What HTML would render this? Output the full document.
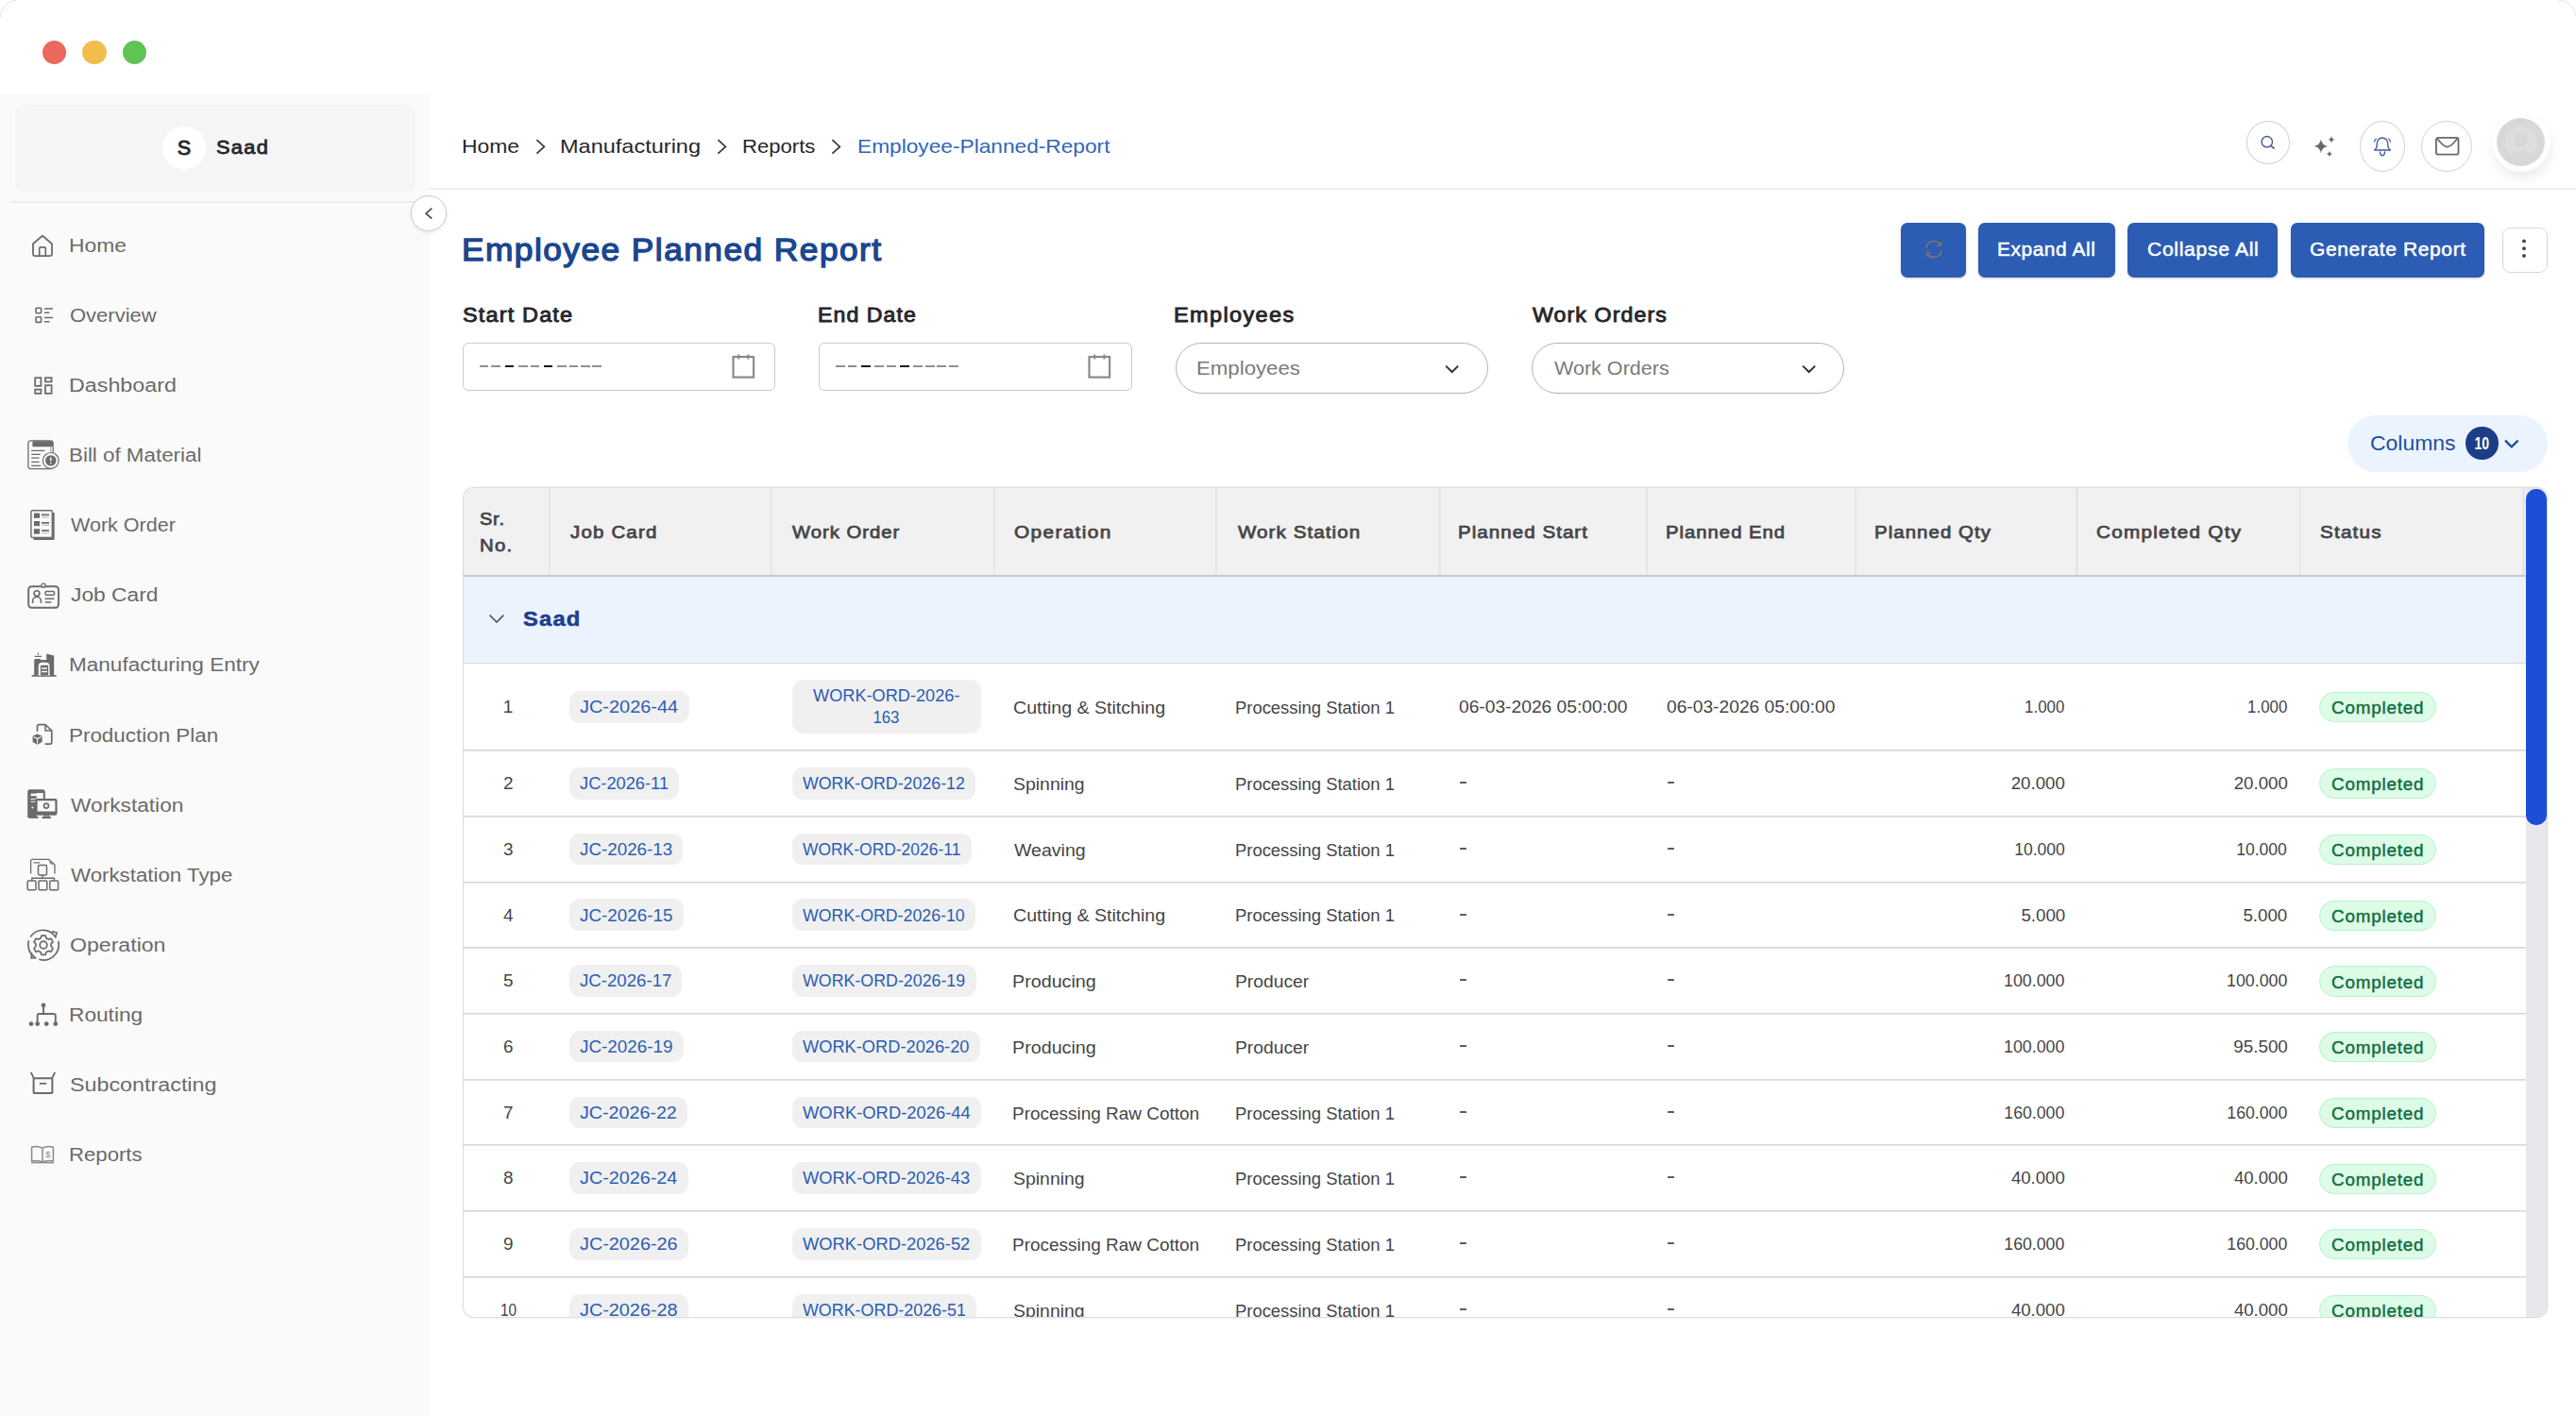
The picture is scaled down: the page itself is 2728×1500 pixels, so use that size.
<!DOCTYPE html>
<html lang="en"><head><meta charset="utf-8"><title>Employee Planned Report</title>
<style>
html,body{margin:0;padding:0;}
body{width:2728px;height:1500px;position:relative;overflow:hidden;background:#fff;font-family:"Liberation Sans", sans-serif;}
span{display:block;}
</style></head><body>
<div style="position:absolute;left:44.60px;top:42.50px;width:25.40px;height:25.40px;box-sizing:border-box;background:#ea685c;border-radius:50%;"></div>
<div style="position:absolute;left:87.15px;top:42.50px;width:25.40px;height:25.40px;box-sizing:border-box;background:#f3bd4e;border-radius:50%;"></div>
<div style="position:absolute;left:129.65px;top:42.50px;width:25.40px;height:25.40px;box-sizing:border-box;background:#60c453;border-radius:50%;"></div>
<svg style="position:absolute;left:0.00px;top:0.00px;" width="20" height="20" viewBox="0 0 20 20" fill="none"><path d="M0.6 17.5 A17 17 0 0 1 17.5 0.6" stroke="#c4c4c8" stroke-width="1.1" stroke-dasharray="1.1 1.9"/></svg>
<svg style="position:absolute;left:2708.00px;top:0.00px;" width="20" height="20" viewBox="0 0 20 20" fill="none"><path d="M2.5 0.6 A17 17 0 0 1 19.4 17.5" stroke="#c4c4c8" stroke-width="1.1" stroke-dasharray="1.1 1.9"/></svg>
<div style="position:absolute;left:0.00px;top:100.00px;width:455.20px;height:1400.00px;box-sizing:border-box;background:#fafafa;"></div>
<div style="position:absolute;left:16.40px;top:110.80px;width:423.20px;height:92.60px;box-sizing:border-box;background:#f5f5f5;border-radius:10px;"></div>
<div style="position:absolute;left:172.20px;top:133.50px;width:45.80px;height:45.80px;box-sizing:border-box;background:#fff;border-radius:50%;"></div>
<span style="position:absolute;left:187.80px;top:142.00px;font-size:21.6px;line-height:29px;font-weight:400;color:#26262b;white-space:nowrap;-webkit-text-stroke:0.86px #26262b;">S</span>
<span style="position:absolute;left:228.67px;top:143.00px;font-size:20.2px;line-height:26px;font-weight:400;color:#26262b;white-space:nowrap;-webkit-text-stroke:0.81px #26262b;letter-spacing:1.275px;transform:scaleX(1.0770);transform-origin:0 0;">Saad</span>
<div style="position:absolute;left:11.00px;top:213.00px;width:429.00px;height:1.80px;box-sizing:border-box;background:#ececec;"></div>
<svg style="position:absolute;left:33.20px;top:247.70px;" width="24" height="25" viewBox="0 0 24 25" fill="none"><path d="M2 10.2 L12 1.7 L22 10.2 V20.8 a2.4 2.4 0 0 1 -2.4 2.4 H4.4 A2.4 2.4 0 0 1 2 20.8 Z" stroke="#6b6a6c" stroke-width="1.8" stroke-linejoin="round"/><path d="M8.7 23 V15.3 a1.5 1.5 0 0 1 1.5 -1.5 h3.6 a1.5 1.5 0 0 1 1.5 1.5 V23" stroke="#6b6a6c" stroke-width="1.7"/></svg>
<span style="position:absolute;left:73.07px;top:247.00px;font-size:20px;line-height:26px;font-weight:400;color:#6a6a6a;white-space:nowrap;transform:scaleX(1.1409);transform-origin:0 0;">Home</span>
<svg style="position:absolute;left:36.90px;top:325.43px;" width="20" height="18" viewBox="0 0 20 18" fill="none"><rect x="1" y="1.2" width="5.6" height="5.6" rx="1" stroke="#6b6a6c" stroke-width="1.6"/><rect x="1" y="10.8" width="5.6" height="5.6" rx="1" stroke="#6b6a6c" stroke-width="1.6"/><path d="M10 2 H19 M10 6.2 H15.5 M10 11.6 H19 M10 15.8 H15.5" stroke="#6b6a6c" stroke-width="1.5"/></svg>
<span style="position:absolute;left:73.91px;top:321.00px;font-size:20px;line-height:26px;font-weight:400;color:#6a6a6a;white-space:nowrap;transform:scaleX(1.0993);transform-origin:0 0;">Overview</span>
<svg style="position:absolute;left:36.10px;top:398.76px;" width="20" height="19" viewBox="0 0 20 19" fill="none"><rect x="1.2" y="1.2" width="6.2" height="8.6" stroke="#6b6a6c" stroke-width="1.8"/><rect x="12" y="1.2" width="6.6" height="4.2" stroke="#6b6a6c" stroke-width="1.8"/><rect x="1.2" y="13.6" width="6.2" height="4.2" stroke="#6b6a6c" stroke-width="1.8"/><rect x="12" y="9.2" width="6.6" height="8.6" stroke="#6b6a6c" stroke-width="1.8"/></svg>
<span style="position:absolute;left:73.04px;top:395.00px;font-size:20px;line-height:26px;font-weight:400;color:#6a6a6a;white-space:nowrap;transform:scaleX(1.1640);transform-origin:0 0;">Dashboard</span>
<svg style="position:absolute;left:28.70px;top:466.09px;" width="34" height="33" viewBox="0 0 34 33" fill="none"><rect x="0.9" y="0.9" width="26.2" height="29.8" rx="2.6" stroke="#6b6a6c" stroke-width="1.3"/><rect x="5.4" y="1.3" width="21.6" height="6" rx="1" fill="#6b6a6c"/><path d="M4.2 11.4 H18.4 M4.2 15.3 H13.6 M4.2 19.2 H12.6 M4.2 23.4 H12.6 M4.2 27.4 H14.2" stroke="#6b6a6c" stroke-width="1.2"/><path d="M24.6 8 V13.4" stroke="#6b6a6c" stroke-width="1" stroke-dasharray="1.4 1"/><circle cx="24.8" cy="21.9" r="8.4" fill="#fafafa" stroke="#6b6a6c" stroke-width="1.2"/><circle cx="24.8" cy="21.9" r="5.7" fill="#6b6a6c"/><path d="M24.8 18.4 V22.6 M24.8 24.2 V25.4" stroke="#fafafa" stroke-width="1.5"/></svg>
<span style="position:absolute;left:73.11px;top:469.00px;font-size:20px;line-height:26px;font-weight:400;color:#6a6a6a;white-space:nowrap;transform:scaleX(1.1177);transform-origin:0 0;">Bill of Material</span>
<svg style="position:absolute;left:32.20px;top:540.32px;" width="28" height="33" viewBox="0 0 28 33" fill="none"><path d="M3.4 30.7 H24.5 V3" stroke="#6b6a6c" stroke-width="2.4" stroke-linejoin="round"/><rect x="0.9" y="0.7" width="22.4" height="28.7" rx="1.6" stroke="#6b6a6c" stroke-width="1.4" fill="#fafafa"/><rect x="3.9" y="3.6" width="6.1" height="5.2" fill="#6b6a6c"/><rect x="3.9" y="12" width="6.1" height="5.2" fill="#6b6a6c"/><rect x="3.9" y="20.2" width="6.1" height="5.4" fill="#6b6a6c"/><path d="M12 5.4 H20 M12 13.8 H20 M12 22.2 H20" stroke="#6b6a6c" stroke-width="1.7"/><path d="M12.4 8 H20 M12.4 16.4 H20 M12.4 24.8 H20" stroke="#6b6a6c" stroke-width=".9" opacity=".55"/></svg>
<span style="position:absolute;left:74.90px;top:543.00px;font-size:20px;line-height:26px;font-weight:400;color:#6a6a6a;white-space:nowrap;transform:scaleX(1.0767);transform-origin:0 0;">Work Order</span>
<svg style="position:absolute;left:28.60px;top:617.05px;" width="34" height="28" viewBox="0 0 34 28" fill="none"><rect x="1.2" y="4.2" width="31.8" height="22.6" rx="3.2" stroke="#6b6a6c" stroke-width="1.9"/><circle cx="17" cy="3.2" r="2.1" fill="#fafafa" stroke="#6b6a6c" stroke-width="1.4"/><circle cx="10" cy="11.6" r="2.9" stroke="#6b6a6c" stroke-width="1.6"/><path d="M5.6 22 v-2.4 a4.4 4.4 0 0 1 8.8 0 V22" stroke="#6b6a6c" stroke-width="1.6"/><rect x="19" y="9.6" width="9.6" height="3.7" rx="1.4" stroke="#6b6a6c" stroke-width="1.5"/><path d="M18.6 17.2 H28.4 M18.6 21 H25.4" stroke="#6b6a6c" stroke-width="1.6"/></svg>
<span style="position:absolute;left:74.56px;top:617.00px;font-size:20px;line-height:26px;font-weight:400;color:#6a6a6a;white-space:nowrap;transform:scaleX(1.1390);transform-origin:0 0;">Job Card</span>
<svg style="position:absolute;left:32.50px;top:691.48px;" width="28" height="27" viewBox="0 0 28 27" fill="none"><path d="M0.6 25 H26.6" stroke="#6b6a6c" stroke-width="1.7"/><path d="M16.2 1.4 L24.2 3.4 V24.6 H16.2 Z" fill="#6b6a6c"/><path d="M3.2 24.6 V8.4 a1.4 1.4 0 0 1 1.4 -1.4 H10 V10 H7.6 V24.6 Z" fill="#6b6a6c"/><path d="M7.4 0.6 V2.6 M3.8 4.3 H11" stroke="#6b6a6c" stroke-width="1.3"/><path d="M6.4 24.6 V14.4 a5 5 0 0 1 5 -5 h4.4 a5 5 0 0 1 5 5 V24.6" fill="#fafafa" stroke="#6b6a6c" stroke-width="2.6"/><rect x="9.9" y="13.8" width="8.2" height="10.6" rx="1" fill="#6b6a6c"/><path d="M11 17 H17 M11 20.6 H17" stroke="#fafafa" stroke-width="1.5"/></svg>
<span style="position:absolute;left:73.10px;top:691.00px;font-size:20px;line-height:26px;font-weight:400;color:#6a6a6a;white-space:nowrap;transform:scaleX(1.1276);transform-origin:0 0;">Manufacturing Entry</span>
<svg style="position:absolute;left:33.20px;top:765.91px;" width="24" height="25" viewBox="0 0 24 25" fill="none"><path d="M6.5 9 V3.2 a1.6 1.6 0 0 1 1.6 -1.6 H15 L21.8 8 V20.6 a1.6 1.6 0 0 1 -1.6 1.6 H14.5" stroke="#6b6a6c" stroke-width="1.7"/><path d="M15 1.8 V8 H21.6" stroke="#6b6a6c" stroke-width="1.5"/><path d="M6.6 11.4 L11.6 13.8 V20 L6.6 22.8 L1.6 20 V13.8 Z" fill="#6b6a6c"/><path d="M2.6 14.6 L6.6 16.6 L10.6 14.6 M6.6 16.6 V21.6" stroke="#fafafa" stroke-width="1.1"/></svg>
<span style="position:absolute;left:73.11px;top:766.00px;font-size:20px;line-height:26px;font-weight:400;color:#6a6a6a;white-space:nowrap;transform:scaleX(1.1201);transform-origin:0 0;">Production Plan</span>
<svg style="position:absolute;left:29.20px;top:836.44px;" width="32" height="32" viewBox="0 0 32 32" fill="none"><path d="M1.2 30 V3 a1.8 1.8 0 0 1 1.8 -1.8 H16 a1.8 1.8 0 0 1 1.8 1.8 V10" stroke="#6b6a6c" stroke-width="2"/><rect x="1.5" y="1.5" width="8.2" height="28.5" fill="#6b6a6c"/><rect x="1.5" y="1.5" width="16" height="2.6" fill="#6b6a6c"/><rect x="3.6" y="4.6" width="11.6" height="2.6" fill="#fafafa"/><path d="M3.4 10.4 H9 M3.4 13.2 H9" stroke="#fafafa" stroke-width="1"/><circle cx="5.4" cy="19.6" r="1" fill="#fafafa"/><rect x="9.5" y="11.2" width="21" height="15.4" rx="1" stroke="#6b6a6c" stroke-width="2.2" fill="#fafafa"/><path d="M10 24.8 H30" stroke="#6b6a6c" stroke-width="2.6"/><circle cx="20" cy="17.6" r="2.5" stroke="#6b6a6c" stroke-width="1.7"/><path d="M15.4 30 H25 M18 29.8 L19.4 27 M22.6 29.8 L21.2 27" stroke="#6b6a6c" stroke-width="1.8"/><path d="M1.5 29.8 H11.4" stroke="#6b6a6c" stroke-width="2.2"/></svg>
<span style="position:absolute;left:74.90px;top:840.00px;font-size:20px;line-height:26px;font-weight:400;color:#6a6a6a;white-space:nowrap;transform:scaleX(1.1346);transform-origin:0 0;">Workstation</span>
<svg style="position:absolute;left:28.20px;top:909.07px;" width="35" height="35" viewBox="0 0 35 35" fill="none"><path d="M4.6 16.6 V3 a1.6 1.6 0 0 1 1.6 -1.6 H23.6 L30 7 V16.6" stroke="#6b6a6c" stroke-width="1.3"/><path d="M7.4 4.9 H14.4" stroke="#6b6a6c" stroke-width="1.2"/><path d="M24.4 4 L27.4 6.8" stroke="#6b6a6c" stroke-width="1.1"/><rect x="12.5" y="7.6" width="9" height="10.4" rx="1.6" stroke="#6b6a6c" stroke-width="1.5"/><path d="M17 18.2 V21.2 M5.8 24.2 V21.2 H29.4 V24.2" stroke="#6b6a6c" stroke-width="1.4"/><rect x="1.2" y="24" width="8.8" height="9.8" rx="1" stroke="#6b6a6c" stroke-width="1.5"/><rect x="13" y="24" width="8.8" height="9.8" rx="1" stroke="#6b6a6c" stroke-width="1.5"/><rect x="24.8" y="24" width="8.8" height="9.8" rx="1" stroke="#6b6a6c" stroke-width="1.5"/></svg>
<span style="position:absolute;left:74.90px;top:914.00px;font-size:20px;line-height:26px;font-weight:400;color:#6a6a6a;white-space:nowrap;transform:scaleX(1.1140);transform-origin:0 0;">Workstation Type</span>
<svg style="position:absolute;left:27.50px;top:982.50px;" width="36.04" height="36.04" viewBox="0 0 34 34" fill="none"><path d="M29.5 9.5 A15 15 0 0 0 4 9" stroke="#6b6a6c" stroke-width="1.6"/><path d="M2.3 12.5 A15.3 15.3 0 0 0 8.6 29.6" stroke="#6b6a6c" stroke-width="1.6"/><path d="M12.5 31.4 A15.3 15.3 0 0 0 31.8 13.2" stroke="#6b6a6c" stroke-width="1.6"/><path d="M25.2 3.4 L30.4 4.8 L28.6 9.8" stroke="#6b6a6c" stroke-width="1.5"/><path d="M5.2 25 L4.8 30.2 L10 30" stroke="#6b6a6c" stroke-width="1.5"/><circle cx="17" cy="17" r="3.6" stroke="#6b6a6c" stroke-width="1.7"/><path d="M15 7.6 h4 l.7 2.6 l2.2 1.2 l2.6 -.8 l2 3.5 l-1.9 1.9 v2.4 l1.9 1.9 l-2 3.5 l-2.6 -.8 l-2.2 1.2 l-.7 2.6 h-4 l-.7 -2.6 l-2.2 -1.2 l-2.6 .8 l-2 -3.5 l1.9 -1.9 v-2.4 l-1.9 -1.9 l2 -3.5 l2.6 .8 l2.2 -1.2 z" stroke="#6b6a6c" stroke-width="1.6" stroke-linejoin="round"/></svg>
<span style="position:absolute;left:73.86px;top:988.00px;font-size:20px;line-height:26px;font-weight:400;color:#6a6a6a;white-space:nowrap;transform:scaleX(1.1551);transform-origin:0 0;">Operation</span>
<svg style="position:absolute;left:29.80px;top:1061.53px;" width="32" height="26" viewBox="0 0 32 26" fill="none"><circle cx="16" cy="2.9" r="2.4" fill="#6b6a6c"/><path d="M16 4 V12 M9.6 21 V14 a2 2 0 0 1 2 -2 H26.8 a2 2 0 0 1 2 2 V21" stroke="#6b6a6c" stroke-width="1.9"/><circle cx="3" cy="22.6" r="2.4" fill="#6b6a6c"/><circle cx="9.7" cy="22.6" r="2.4" fill="#6b6a6c"/><circle cx="19.2" cy="22.6" r="2.4" fill="#6b6a6c"/><circle cx="28.8" cy="22.6" r="2.4" fill="#6b6a6c"/></svg>
<span style="position:absolute;left:73.08px;top:1062.00px;font-size:20px;line-height:26px;font-weight:400;color:#6a6a6a;white-space:nowrap;transform:scaleX(1.1344);transform-origin:0 0;">Routing</span>
<svg style="position:absolute;left:32.20px;top:1135.36px;" width="28" height="26" viewBox="0 0 28 26" fill="none"><path d="M0.8 0.8 L3.8 7.2 M26.2 0.8 L23.2 7.2" stroke="#6b6a6c" stroke-width="1.8"/><rect x="3.6" y="7.2" width="19.8" height="15.8" rx="0.8" stroke="#6b6a6c" stroke-width="2"/><path d="M9.8 12.8 H17.2" stroke="#6b6a6c" stroke-width="1.8"/></svg>
<span style="position:absolute;left:73.85px;top:1136.00px;font-size:20px;line-height:26px;font-weight:400;color:#6a6a6a;white-space:nowrap;transform:scaleX(1.1653);transform-origin:0 0;">Subcontracting</span>
<svg style="position:absolute;left:32.20px;top:1212.59px;" width="26" height="20" viewBox="0 0 26 20" fill="none"><path d="M13 3.2 C10 1.6 5 1.4 1.6 2.2 V17 C5 16.2 10 16.4 13 18 C16 16.4 21 16.2 24.4 17 V2.2 C21 1.4 16 1.6 13 3.2 Z M13 3.2 V18" stroke="#8a8a8a" stroke-width="1.5" stroke-linejoin="round"/><path d="M1 18.6 H25" stroke="#8a8a8a" stroke-width="1.5"/><text x="18.8" y="12.8" font-size="9" fill="#8a8a8a" text-anchor="middle" font-family="Liberation Sans">$</text></svg>
<span style="position:absolute;left:73.13px;top:1210.00px;font-size:20px;line-height:26px;font-weight:400;color:#6a6a6a;white-space:nowrap;transform:scaleX(1.1073);transform-origin:0 0;">Reports</span>
<div style="position:absolute;left:435.40px;top:207.30px;width:37.40px;height:37.40px;box-sizing:border-box;background:#fff;border-radius:50%;border:1.7px solid #c9c9cd;box-shadow:0 2px 4px rgba(0,0,0,.07);"></div>
<svg style="position:absolute;left:447.00px;top:218.00px;" width="14" height="16" viewBox="0 0 14 16" fill="none"><path d="M10.3 2.7 L4.2 8.2 L10.3 13.7" stroke="#4a4a4e" stroke-width="1.7"/></svg>
<div style="position:absolute;left:455.20px;top:199.00px;width:2272.80px;height:1.90px;box-sizing:border-box;background:#efefef;"></div>
<span style="position:absolute;left:488.65px;top:141.00px;font-size:21px;line-height:27px;font-weight:400;color:#26262b;white-space:nowrap;transform:scaleX(1.0910);transform-origin:0 0;">Home</span>
<span style="position:absolute;left:593.40px;top:141.00px;font-size:21px;line-height:27px;font-weight:400;color:#26262b;white-space:nowrap;transform:scaleX(1.1199);transform-origin:0 0;">Manufacturing</span>
<span style="position:absolute;left:785.81px;top:141.00px;font-size:21px;line-height:27px;font-weight:400;color:#26262b;white-space:nowrap;transform:scaleX(1.0530);transform-origin:0 0;">Reports</span>
<span style="position:absolute;left:907.56px;top:141.00px;font-size:21px;line-height:27px;font-weight:400;color:#2f66bd;white-space:nowrap;transform:scaleX(1.0809);transform-origin:0 0;">Employee-Planned-Report</span>
<svg style="position:absolute;left:566.80px;top:146.50px;" width="12" height="17" viewBox="0 0 12 17" fill="none"><path d="M1.4 1.2 L9.4 8.4 L1.4 15.6" stroke="#333" stroke-width="1.6"/></svg>
<svg style="position:absolute;left:758.90px;top:146.50px;" width="12" height="17" viewBox="0 0 12 17" fill="none"><path d="M1.4 1.2 L9.4 8.4 L1.4 15.6" stroke="#333" stroke-width="1.6"/></svg>
<svg style="position:absolute;left:880.00px;top:146.50px;" width="12" height="17" viewBox="0 0 12 17" fill="none"><path d="M1.4 1.2 L9.4 8.4 L1.4 15.6" stroke="#333" stroke-width="1.6"/></svg>
<div style="position:absolute;left:2379.10px;top:127.90px;width:45.60px;height:45.70px;box-sizing:border-box;background:#fff;border-radius:50%;border:1.3px solid #d2d2d5;"></div>
<svg style="position:absolute;left:2391.00px;top:139.50px;" width="22" height="22" viewBox="0 0 22 22" fill="none"><circle cx="9.8" cy="10.2" r="5.7" stroke="#3f5b9e" stroke-width="1.35"/><path d="M14 14.4 L17.5 17.6" stroke="#3f5b9e" stroke-width="1.6"/></svg>
<svg style="position:absolute;left:2449.00px;top:142.00px;" width="26" height="26" viewBox="0 0 26 26" fill="none"><path d="M8.9 5.6 Q9.9 12 16.2 13 Q9.9 14 8.9 20.4 Q7.9 14 1.6 13 Q7.9 12 8.9 5.6 Z M20 2.2 Q20.5 5.2 23.4 5.7 Q20.5 6.2 20 9.2 Q19.5 6.2 16.6 5.7 Q19.5 5.2 20 2.2 Z M17.9 17.9 Q18.4 20.6 21 21.1 Q18.4 21.6 17.9 24.3 Q17.4 21.6 14.8 21.1 Q17.4 20.6 17.9 17.9 Z" fill="#69676b"/></svg>
<div style="position:absolute;left:2498.80px;top:127.90px;width:48.00px;height:53.80px;box-sizing:border-box;background:#fff;border-radius:50%;border:1.3px solid #d2d2d5;"></div>
<svg style="position:absolute;left:2511.80px;top:143.70px;" width="22" height="23" viewBox="0 0 22 23" fill="none"><path d="M2.5 15 C4.2 13.8 5.1 12.6 5.2 10.6 V8.2 C5.2 4.6 7.8 2 11 2 C14.2 2 16.8 4.6 16.8 8.2 V10.6 C16.9 12.6 17.8 13.8 19.5 15 Z" stroke="#3f5b9e" stroke-width="1.35" stroke-linejoin="round"/><path d="M8.3 16.4 C8.6 19.2 10 20.8 11 20.8 C12 20.8 13.4 19.2 13.7 16.4" stroke="#3f5b9e" stroke-width="1.3"/><path d="M4.6 2.6 Q2.8 4.2 2.4 6.6 M17.4 2.6 Q19.2 4.2 19.6 6.6" stroke="#3f5b9e" stroke-width="1.2"/></svg>
<div style="position:absolute;left:2564.30px;top:127.90px;width:53.80px;height:53.80px;box-sizing:border-box;background:#fff;border-radius:50%;border:1.3px solid #d2d2d5;"></div>
<svg style="position:absolute;left:2577.50px;top:144.20px;" width="28" height="22" viewBox="0 0 28 22" fill="none"><rect x="1.9" y="1.9" width="23.6" height="17.8" rx="2.2" stroke="#6a676b" stroke-width="1.8"/><path d="M3 2.8 C7 8 10.5 11.6 13.7 11.6 C16.9 11.6 20.4 8 24.4 2.8" stroke="#6a676b" stroke-width="1.7"/></svg>
<div style="position:absolute;left:2638.60px;top:119.40px;width:62.60px;height:62.60px;box-sizing:border-box;background:#fff;border-radius:50%;box-shadow:1px 7px 12px rgba(0,0,0,.075);"></div>
<div style="position:absolute;left:2644.40px;top:125.20px;width:51.00px;height:51.00px;box-sizing:border-box;background:#d8d8da;border-radius:50%;overflow:hidden;"><div style="position:absolute;left:8.5px;top:9px;width:34px;height:34px;border-radius:50%;background:#dededf;overflow:hidden"><div style="position:absolute;left:9.5px;top:7px;width:15px;height:15px;border-radius:50%;background:#d7d7d9"></div><div style="position:absolute;left:4px;top:25px;width:26px;height:20px;border-radius:50%;background:#d7d7d9"></div></div></div>
<span style="position:absolute;left:488.95px;top:244.00px;font-size:32.9px;line-height:41px;font-weight:400;color:#1b4690;white-space:nowrap;-webkit-text-stroke:1.32px #1b4690;letter-spacing:1.365px;transform:scaleX(1.0727);transform-origin:0 0;">Employee Planned Report</span>
<div style="position:absolute;left:2012.90px;top:235.60px;width:68.90px;height:58.20px;box-sizing:border-box;background:#2c5cb3;border-radius:7px;box-shadow:0 1px 3px rgba(0,0,0,.18);"></div>
<svg style="position:absolute;left:2037.40px;top:254.20px;" width="22" height="20" viewBox="0 0 22 20" fill="none"><path d="M3 9 A8 7.6 0 0 1 17.6 4.8 M19 11 A8 7.6 0 0 1 4.4 15.2" stroke="#7f7672" stroke-width="1.5"/><path d="M14 6.2 L18.2 6 L18.6 1.8 M8 13.8 L3.8 14 L3.4 18.2" stroke="#7f7672" stroke-width="1.4"/></svg>
<div style="position:absolute;left:2095.40px;top:235.60px;width:144.30px;height:58.20px;box-sizing:border-box;background:#2c5cb3;border-radius:7px;box-shadow:0 1px 3px rgba(0,0,0,.18);"></div>
<span style="position:absolute;left:2115.17px;top:251.00px;font-size:19.9px;line-height:26px;font-weight:400;color:#fff;white-space:nowrap;-webkit-text-stroke:0.48px #fff;letter-spacing:0.539px;transform:scaleX(1.0498);transform-origin:0 0;">Expand All</span>
<div style="position:absolute;left:2253.40px;top:235.60px;width:158.60px;height:58.20px;box-sizing:border-box;background:#2c5cb3;border-radius:7px;box-shadow:0 1px 3px rgba(0,0,0,.18);"></div>
<span style="position:absolute;left:2273.59px;top:251.00px;font-size:19.9px;line-height:26px;font-weight:400;color:#fff;white-space:nowrap;-webkit-text-stroke:0.48px #fff;letter-spacing:0.626px;transform:scaleX(1.0625);transform-origin:0 0;">Collapse All</span>
<div style="position:absolute;left:2426.00px;top:235.60px;width:205.40px;height:58.20px;box-sizing:border-box;background:#2c5cb3;border-radius:7px;box-shadow:0 1px 3px rgba(0,0,0,.18);"></div>
<span style="position:absolute;left:2445.80px;top:251.00px;font-size:19.9px;line-height:26px;font-weight:400;color:#fff;white-space:nowrap;-webkit-text-stroke:0.48px #fff;letter-spacing:0.604px;transform:scaleX(1.0542);transform-origin:0 0;">Generate Report</span>
<div style="position:absolute;left:2650.00px;top:240.50px;width:47.80px;height:48.10px;box-sizing:border-box;background:#fff;border-radius:8.5px;border:1.6px solid #d6d6da;"></div>
<svg style="position:absolute;left:2668.00px;top:250.00px;" width="10" height="26" viewBox="0 0 10 26" fill="none"><circle cx="5" cy="5.4" r="1.95" fill="#4a464c"/><circle cx="5" cy="13.2" r="1.95" fill="#4a464c"/><circle cx="5" cy="21" r="1.95" fill="#4a464c"/></svg>
<span style="position:absolute;left:489.69px;top:320.00px;font-size:21.5px;line-height:28px;font-weight:400;color:#26262b;white-space:nowrap;-webkit-text-stroke:0.86px #26262b;letter-spacing:1.067px;transform:scaleX(1.0910);transform-origin:0 0;">Start Date</span>
<span style="position:absolute;left:866.24px;top:320.00px;font-size:21.5px;line-height:28px;font-weight:400;color:#26262b;white-space:nowrap;-webkit-text-stroke:0.86px #26262b;letter-spacing:1.004px;transform:scaleX(1.0740);transform-origin:0 0;">End Date</span>
<span style="position:absolute;left:1243.42px;top:320.00px;font-size:21.5px;line-height:28px;font-weight:400;color:#26262b;white-space:nowrap;-webkit-text-stroke:0.86px #26262b;letter-spacing:1.296px;transform:scaleX(1.0900);transform-origin:0 0;">Employees</span>
<span style="position:absolute;left:1622.66px;top:320.00px;font-size:21.5px;line-height:28px;font-weight:400;color:#26262b;white-space:nowrap;-webkit-text-stroke:0.86px #26262b;letter-spacing:1.022px;transform:scaleX(1.0775);transform-origin:0 0;">Work Orders</span>
<div style="position:absolute;left:490.00px;top:363.00px;width:331.20px;height:51.00px;box-sizing:border-box;background:#fff;border-radius:6px;border:1.4px solid #cbcbcb;"></div>
<div style="position:absolute;left:507.70px;top:386.90px;width:9.80px;height:2.00px;box-sizing:border-box;background:#909090;"></div>
<div style="position:absolute;left:520.20px;top:386.90px;width:9.80px;height:2.00px;box-sizing:border-box;background:#909090;"></div>
<div style="position:absolute;left:534.50px;top:386.90px;width:9.80px;height:2.00px;box-sizing:border-box;background:#1a1a1a;"></div>
<div style="position:absolute;left:548.80px;top:386.90px;width:9.80px;height:2.00px;box-sizing:border-box;background:#909090;"></div>
<div style="position:absolute;left:561.70px;top:386.90px;width:9.80px;height:2.00px;box-sizing:border-box;background:#909090;"></div>
<div style="position:absolute;left:575.70px;top:386.90px;width:9.80px;height:2.00px;box-sizing:border-box;background:#1a1a1a;"></div>
<div style="position:absolute;left:590.00px;top:386.90px;width:9.80px;height:2.00px;box-sizing:border-box;background:#909090;"></div>
<div style="position:absolute;left:602.60px;top:386.90px;width:9.80px;height:2.00px;box-sizing:border-box;background:#909090;"></div>
<div style="position:absolute;left:614.90px;top:386.90px;width:9.80px;height:2.00px;box-sizing:border-box;background:#909090;"></div>
<div style="position:absolute;left:627.40px;top:386.90px;width:9.80px;height:2.00px;box-sizing:border-box;background:#909090;"></div>
<svg style="position:absolute;left:773.90px;top:374.10px;" width="26" height="28" viewBox="0 0 26 28" fill="none"><rect x="2.5" y="4" width="21.6" height="21.6" stroke="#8a8a8a" stroke-width="2.2"/><path d="M8.2 1.4 V6.4 M18.4 1.4 V6.4" stroke="#8a8a8a" stroke-width="2"/></svg>
<div style="position:absolute;left:867.40px;top:363.00px;width:331.20px;height:51.00px;box-sizing:border-box;background:#fff;border-radius:6px;border:1.4px solid #cbcbcb;"></div>
<div style="position:absolute;left:885.10px;top:386.90px;width:9.80px;height:2.00px;box-sizing:border-box;background:#909090;"></div>
<div style="position:absolute;left:897.60px;top:386.90px;width:9.80px;height:2.00px;box-sizing:border-box;background:#909090;"></div>
<div style="position:absolute;left:911.90px;top:386.90px;width:9.80px;height:2.00px;box-sizing:border-box;background:#1a1a1a;"></div>
<div style="position:absolute;left:926.20px;top:386.90px;width:9.80px;height:2.00px;box-sizing:border-box;background:#909090;"></div>
<div style="position:absolute;left:939.10px;top:386.90px;width:9.80px;height:2.00px;box-sizing:border-box;background:#909090;"></div>
<div style="position:absolute;left:953.10px;top:386.90px;width:9.80px;height:2.00px;box-sizing:border-box;background:#1a1a1a;"></div>
<div style="position:absolute;left:967.40px;top:386.90px;width:9.80px;height:2.00px;box-sizing:border-box;background:#909090;"></div>
<div style="position:absolute;left:980.00px;top:386.90px;width:9.80px;height:2.00px;box-sizing:border-box;background:#909090;"></div>
<div style="position:absolute;left:992.30px;top:386.90px;width:9.80px;height:2.00px;box-sizing:border-box;background:#909090;"></div>
<div style="position:absolute;left:1004.80px;top:386.90px;width:9.80px;height:2.00px;box-sizing:border-box;background:#909090;"></div>
<svg style="position:absolute;left:1151.30px;top:374.10px;" width="26" height="28" viewBox="0 0 26 28" fill="none"><rect x="2.5" y="4" width="21.6" height="21.6" stroke="#8a8a8a" stroke-width="2.2"/><path d="M8.2 1.4 V6.4 M18.4 1.4 V6.4" stroke="#8a8a8a" stroke-width="2"/></svg>
<div style="position:absolute;left:1244.80px;top:363.00px;width:331.20px;height:53.80px;box-sizing:border-box;background:#fff;border-radius:27px;border:1.3px solid #b4b4b4;"></div>
<span style="position:absolute;left:1266.70px;top:376.00px;font-size:21px;line-height:27px;font-weight:400;color:#7a7a7a;white-space:nowrap;transform:scaleX(1.0583);transform-origin:0 0;">Employees</span>
<svg style="position:absolute;left:1529.40px;top:384.50px;" width="18" height="13" viewBox="0 0 18 13" fill="none"><path d="M2.2 2.6 L8.7 9 L15.2 2.6" stroke="#333" stroke-width="2"/></svg>
<div style="position:absolute;left:1622.00px;top:363.00px;width:331.20px;height:53.80px;box-sizing:border-box;background:#fff;border-radius:27px;border:1.3px solid #b4b4b4;"></div>
<span style="position:absolute;left:1645.70px;top:376.00px;font-size:21px;line-height:27px;font-weight:400;color:#7a7a7a;white-space:nowrap;transform:scaleX(1.0261);transform-origin:0 0;">Work Orders</span>
<svg style="position:absolute;left:1906.60px;top:384.50px;" width="18" height="13" viewBox="0 0 18 13" fill="none"><path d="M2.2 2.6 L8.7 9 L15.2 2.6" stroke="#333" stroke-width="2"/></svg>
<div style="position:absolute;left:2486.00px;top:439.80px;width:212.00px;height:59.80px;box-sizing:border-box;background:#ebf3fe;border-radius:30px;"></div>
<span style="position:absolute;left:2509.63px;top:456.00px;font-size:21.5px;line-height:28px;font-weight:400;color:#1f4f9c;white-space:nowrap;transform:scaleX(1.0664);transform-origin:0 0;">Columns</span>
<div style="position:absolute;left:2611.20px;top:452.20px;width:34.40px;height:34.40px;box-sizing:border-box;background:#1b3f86;border-radius:50%;"></div>
<span style="position:absolute;left:2618.12px;top:457.00px;font-size:18.6px;line-height:25px;font-weight:700;color:#fff;white-space:nowrap;transform:scaleX(0.7535);transform-origin:50% 0;">10</span>
<svg style="position:absolute;left:2651.00px;top:463.50px;" width="18" height="13" viewBox="0 0 18 13" fill="none"><path d="M2 2.6 L8.8 9.4 L15.6 2.6" stroke="#1f4f9c" stroke-width="2.3"/></svg>
<div style="position:absolute;left:490.5px;top:517.2px;width:2206.5px;height:877.3999999999999px;box-sizing:border-box;border-radius:11px;overflow:hidden;background:#fff;box-shadow:0 0 0 1.2px #dcdce4;">
<div style="position:absolute;left:-490.5px;top:-517.2px;width:2728px;height:1500px;">
<div style="position:absolute;left:490.50px;top:517.20px;width:2184.70px;height:91.80px;box-sizing:border-box;background:#f1f1f1;"></div>
<div style="position:absolute;left:490.50px;top:609.00px;width:2184.70px;height:1.70px;box-sizing:border-box;background:#c9c9c9;"></div>
<div style="position:absolute;left:580.50px;top:517.20px;width:2.40px;height:91.80px;box-sizing:border-box;background:#e5e5ea;"></div>
<div style="position:absolute;left:815.60px;top:517.20px;width:2.40px;height:91.80px;box-sizing:border-box;background:#e5e5ea;"></div>
<div style="position:absolute;left:1051.70px;top:517.20px;width:2.40px;height:91.80px;box-sizing:border-box;background:#e5e5ea;"></div>
<div style="position:absolute;left:1286.90px;top:517.20px;width:2.40px;height:91.80px;box-sizing:border-box;background:#e5e5ea;"></div>
<div style="position:absolute;left:1523.20px;top:517.20px;width:2.40px;height:91.80px;box-sizing:border-box;background:#e5e5ea;"></div>
<div style="position:absolute;left:1742.50px;top:517.20px;width:2.40px;height:91.80px;box-sizing:border-box;background:#e5e5ea;"></div>
<div style="position:absolute;left:1963.50px;top:517.20px;width:2.40px;height:91.80px;box-sizing:border-box;background:#e5e5ea;"></div>
<div style="position:absolute;left:2198.20px;top:517.20px;width:2.40px;height:91.80px;box-sizing:border-box;background:#e5e5ea;"></div>
<div style="position:absolute;left:2434.50px;top:517.20px;width:2.40px;height:91.80px;box-sizing:border-box;background:#e5e5ea;"></div>
<div style="position:absolute;left:2671.20px;top:517.20px;width:2.40px;height:91.80px;box-sizing:border-box;background:#e5e5ea;"></div>
<span style="position:absolute;left:508.35px;top:537.00px;font-size:18.8px;line-height:25px;font-weight:400;color:#454548;white-space:nowrap;-webkit-text-stroke:0.75px #454548;letter-spacing:0.721px;transform:scaleX(1.0634);transform-origin:0 0;">Sr.</span>
<span style="position:absolute;left:507.58px;top:565.00px;font-size:18.8px;line-height:25px;font-weight:400;color:#454548;white-space:nowrap;-webkit-text-stroke:0.75px #454548;letter-spacing:1.204px;transform:scaleX(1.0822);transform-origin:0 0;">No.</span>
<span style="position:absolute;left:603.69px;top:551.00px;font-size:18.8px;line-height:25px;font-weight:400;color:#454548;white-space:nowrap;-webkit-text-stroke:0.75px #454548;letter-spacing:1.073px;transform:scaleX(1.0903);transform-origin:0 0;">Job Card</span>
<span style="position:absolute;left:839.41px;top:551.00px;font-size:18.8px;line-height:25px;font-weight:400;color:#454548;white-space:nowrap;-webkit-text-stroke:0.75px #454548;letter-spacing:0.928px;transform:scaleX(1.0791);transform-origin:0 0;">Work Order</span>
<span style="position:absolute;left:1073.73px;top:551.00px;font-size:18.8px;line-height:25px;font-weight:400;color:#454548;white-space:nowrap;-webkit-text-stroke:0.75px #454548;letter-spacing:1.228px;transform:scaleX(1.1077);transform-origin:0 0;">Operation</span>
<span style="position:absolute;left:1310.91px;top:551.00px;font-size:18.8px;line-height:25px;font-weight:400;color:#454548;white-space:nowrap;-webkit-text-stroke:0.75px #454548;letter-spacing:1.001px;transform:scaleX(1.0934);transform-origin:0 0;">Work Station</span>
<span style="position:absolute;left:1544.37px;top:551.00px;font-size:18.8px;line-height:25px;font-weight:400;color:#454548;white-space:nowrap;-webkit-text-stroke:0.75px #454548;letter-spacing:0.960px;transform:scaleX(1.0925);transform-origin:0 0;">Planned Start</span>
<span style="position:absolute;left:1764.29px;top:551.00px;font-size:18.8px;line-height:25px;font-weight:400;color:#454548;white-space:nowrap;-webkit-text-stroke:0.75px #454548;letter-spacing:0.922px;transform:scaleX(1.0802);transform-origin:0 0;">Planned End</span>
<span style="position:absolute;left:1984.58px;top:551.00px;font-size:18.8px;line-height:25px;font-weight:400;color:#454548;white-space:nowrap;-webkit-text-stroke:0.75px #454548;letter-spacing:0.974px;transform:scaleX(1.0866);transform-origin:0 0;">Planned Qty</span>
<span style="position:absolute;left:2220.42px;top:551.00px;font-size:18.8px;line-height:25px;font-weight:400;color:#454548;white-space:nowrap;-webkit-text-stroke:0.75px #454548;letter-spacing:1.157px;transform:scaleX(1.0998);transform-origin:0 0;">Completed Qty</span>
<span style="position:absolute;left:2456.54px;top:551.00px;font-size:18.8px;line-height:25px;font-weight:400;color:#454548;white-space:nowrap;-webkit-text-stroke:0.75px #454548;letter-spacing:1.115px;transform:scaleX(1.0958);transform-origin:0 0;">Status</span>
<div style="position:absolute;left:490.50px;top:610.80px;width:2184.70px;height:91.20px;box-sizing:border-box;background:#edf3fe;"></div>
<div style="position:absolute;left:490.50px;top:701.80px;width:2184.70px;height:1.30px;box-sizing:border-box;background:#d3d6dd;"></div>
<svg style="position:absolute;left:516.50px;top:649.50px;" width="18" height="12" viewBox="0 0 18 12" fill="none"><path d="M1.6 1.6 L9 9 L16.4 1.6" stroke="#555" stroke-width="1.6"/></svg>
<span style="position:absolute;left:554.35px;top:641.00px;font-size:22.4px;line-height:29px;font-weight:700;color:#1a408f;white-space:nowrap;-webkit-text-stroke:0.54px #1a408f;letter-spacing:1.118px;transform:scaleX(1.0605);transform-origin:0 0;">Saad</span>
<div style="position:absolute;left:2675.30px;top:517.20px;width:21.70px;height:877.40px;box-sizing:border-box;background:#e7e7ec;"></div>
<div style="position:absolute;left:2675.30px;top:517.60px;width:21.60px;height:356.80px;box-sizing:border-box;background:#1d4ed8;border-radius:10.8px;"></div>
<div style="position:absolute;left:490.50px;top:794.00px;width:2184.70px;height:2.00px;box-sizing:border-box;background:linear-gradient(#d8d8da 50%,#e6e6e8 50%);"></div>
<span style="position:absolute;left:532.80px;top:736.00px;font-size:18.9px;line-height:25px;font-weight:400;color:#454548;white-space:nowrap;">1</span>
<div style="position:absolute;left:602.60px;top:732.05px;width:127.00px;height:33.60px;box-sizing:border-box;background:#f0f0f0;border-radius:11px;"></div>
<span style="position:absolute;left:614.18px;top:736.00px;font-size:18.5px;line-height:25px;font-weight:400;color:#2b5db3;white-space:nowrap;transform:scaleX(1.0774);transform-origin:0 0;">JC-2026-44</span>
<div style="position:absolute;left:838.60px;top:720.40px;width:200.40px;height:56.60px;box-sizing:border-box;background:#f0f0f0;border-radius:12px;"></div>
<span style="position:absolute;left:861.30px;top:724.00px;font-size:18.5px;line-height:25px;font-weight:400;color:#2b5db3;white-space:nowrap;transform:scaleX(0.9820);transform-origin:0 0;">WORK-ORD-2026-</span>
<span style="position:absolute;left:923.09px;top:747.00px;font-size:18.5px;line-height:25px;font-weight:400;color:#2b5db3;white-space:nowrap;transform:scaleX(0.9066);transform-origin:50% 0;">163</span>
<span style="position:absolute;left:1073.04px;top:737.00px;font-size:18.3px;line-height:25px;font-weight:400;color:#454548;white-space:nowrap;transform:scaleX(1.0709);transform-origin:0 0;">Cutting &amp; Stitching</span>
<span style="position:absolute;left:1308.49px;top:737.00px;font-size:18.3px;line-height:25px;font-weight:400;color:#454548;white-space:nowrap;transform:scaleX(1.0074);transform-origin:0 0;">Processing Station 1</span>
<span style="position:absolute;left:1544.99px;top:736.00px;font-size:18.9px;line-height:25px;font-weight:400;color:#454548;white-space:nowrap;transform:scaleX(1.0167);transform-origin:0 0;">06-03-2026 05:00:00</span>
<span style="position:absolute;left:1764.79px;top:736.00px;font-size:18.9px;line-height:25px;font-weight:400;color:#454548;white-space:nowrap;transform:scaleX(1.0167);transform-origin:0 0;">06-03-2026 05:00:00</span>
<span style="position:absolute;right:541.27px;top:736.00px;font-size:18.9px;line-height:25px;font-weight:400;color:#454548;white-space:nowrap;transform:scaleX(0.8919);transform-origin:100% 0;">1.000</span>
<span style="position:absolute;right:305.77px;top:736.00px;font-size:18.9px;line-height:25px;font-weight:400;color:#454548;white-space:nowrap;transform:scaleX(0.8919);transform-origin:100% 0;">1.000</span>
<div style="position:absolute;left:2456.00px;top:733.25px;width:123.60px;height:32.20px;box-sizing:border-box;background:#dcfce7;border-radius:16.2px;border:1.3px solid #b9f1cc;"></div>
<span style="position:absolute;left:2469.07px;top:738.00px;font-size:17.6px;line-height:24px;font-weight:400;color:#126d40;white-space:nowrap;-webkit-text-stroke:0.42px #126d40;letter-spacing:0.772px;transform:scaleX(1.0688);transform-origin:0 0;">Completed</span>
<div style="position:absolute;left:490.50px;top:864.00px;width:2184.70px;height:2.00px;box-sizing:border-box;background:linear-gradient(#d8d8da 50%,#e6e6e8 50%);"></div>
<span style="position:absolute;left:533.05px;top:817.00px;font-size:18.9px;line-height:25px;font-weight:400;color:#454548;white-space:nowrap;">2</span>
<div style="position:absolute;left:602.60px;top:812.98px;width:116.60px;height:33.60px;box-sizing:border-box;background:#f0f0f0;border-radius:11px;"></div>
<span style="position:absolute;left:614.20px;top:817.00px;font-size:18.5px;line-height:25px;font-weight:400;color:#2b5db3;white-space:nowrap;transform:scaleX(0.9872);transform-origin:0 0;">JC-2026-11</span>
<div style="position:absolute;left:838.60px;top:812.98px;width:194.60px;height:33.60px;box-sizing:border-box;background:#f0f0f0;border-radius:11px;"></div>
<span style="position:absolute;left:850.40px;top:817.00px;font-size:18.5px;line-height:25px;font-weight:400;color:#2b5db3;white-space:nowrap;transform:scaleX(0.9607);transform-origin:0 0;">WORK-ORD-2026-12</span>
<span style="position:absolute;left:1073.15px;top:818.00px;font-size:18.3px;line-height:25px;font-weight:400;color:#454548;white-space:nowrap;transform:scaleX(1.0629);transform-origin:0 0;">Spinning</span>
<span style="position:absolute;left:1308.49px;top:818.00px;font-size:18.3px;line-height:25px;font-weight:400;color:#454548;white-space:nowrap;transform:scaleX(1.0074);transform-origin:0 0;">Processing Station 1</span>
<div style="position:absolute;left:1545.80px;top:828.00px;width:7.60px;height:2.00px;box-sizing:border-box;background:#5c5c60;border-radius:0.6px;"></div>
<div style="position:absolute;left:1765.60px;top:828.00px;width:7.60px;height:2.00px;box-sizing:border-box;background:#5c5c60;border-radius:0.6px;"></div>
<span style="position:absolute;right:541.20px;top:817.00px;font-size:18.9px;line-height:25px;font-weight:400;color:#454548;white-space:nowrap;transform:scaleX(0.9876);transform-origin:100% 0;">20.000</span>
<span style="position:absolute;right:305.70px;top:817.00px;font-size:18.9px;line-height:25px;font-weight:400;color:#454548;white-space:nowrap;transform:scaleX(0.9876);transform-origin:100% 0;">20.000</span>
<div style="position:absolute;left:2456.00px;top:814.18px;width:123.60px;height:32.20px;box-sizing:border-box;background:#dcfce7;border-radius:16.2px;border:1.3px solid #b9f1cc;"></div>
<span style="position:absolute;left:2469.07px;top:819.00px;font-size:17.6px;line-height:24px;font-weight:400;color:#126d40;white-space:nowrap;-webkit-text-stroke:0.42px #126d40;letter-spacing:0.772px;transform:scaleX(1.0688);transform-origin:0 0;">Completed</span>
<div style="position:absolute;left:490.50px;top:934.00px;width:2184.70px;height:2.00px;box-sizing:border-box;background:linear-gradient(#d8d8da 50%,#e6e6e8 50%);"></div>
<span style="position:absolute;left:533.10px;top:887.00px;font-size:18.9px;line-height:25px;font-weight:400;color:#454548;white-space:nowrap;">3</span>
<div style="position:absolute;left:602.60px;top:882.73px;width:120.80px;height:33.60px;box-sizing:border-box;background:#f0f0f0;border-radius:11px;"></div>
<span style="position:absolute;left:614.20px;top:887.00px;font-size:18.5px;line-height:25px;font-weight:400;color:#2b5db3;white-space:nowrap;transform:scaleX(1.0159);transform-origin:0 0;">JC-2026-13</span>
<div style="position:absolute;left:838.60px;top:882.73px;width:190.10px;height:33.60px;box-sizing:border-box;background:#f0f0f0;border-radius:11px;"></div>
<span style="position:absolute;left:850.40px;top:887.00px;font-size:18.5px;line-height:25px;font-weight:400;color:#2b5db3;white-space:nowrap;transform:scaleX(0.9427);transform-origin:0 0;">WORK-ORD-2026-11</span>
<span style="position:absolute;left:1074.00px;top:888.00px;font-size:18.3px;line-height:25px;font-weight:400;color:#454548;white-space:nowrap;transform:scaleX(1.0690);transform-origin:0 0;">Weaving</span>
<span style="position:absolute;left:1308.49px;top:888.00px;font-size:18.3px;line-height:25px;font-weight:400;color:#454548;white-space:nowrap;transform:scaleX(1.0074);transform-origin:0 0;">Processing Station 1</span>
<div style="position:absolute;left:1545.80px;top:898.00px;width:7.60px;height:2.00px;box-sizing:border-box;background:#5c5c60;border-radius:0.6px;"></div>
<div style="position:absolute;left:1765.60px;top:898.00px;width:7.60px;height:2.00px;box-sizing:border-box;background:#5c5c60;border-radius:0.6px;"></div>
<span style="position:absolute;right:541.24px;top:887.00px;font-size:18.9px;line-height:25px;font-weight:400;color:#454548;white-space:nowrap;transform:scaleX(0.9283);transform-origin:100% 0;">10.000</span>
<span style="position:absolute;right:305.74px;top:887.00px;font-size:18.9px;line-height:25px;font-weight:400;color:#454548;white-space:nowrap;transform:scaleX(0.9283);transform-origin:100% 0;">10.000</span>
<div style="position:absolute;left:2456.00px;top:883.93px;width:123.60px;height:32.20px;box-sizing:border-box;background:#dcfce7;border-radius:16.2px;border:1.3px solid #b9f1cc;"></div>
<span style="position:absolute;left:2469.07px;top:889.00px;font-size:17.6px;line-height:24px;font-weight:400;color:#126d40;white-space:nowrap;-webkit-text-stroke:0.42px #126d40;letter-spacing:0.772px;transform:scaleX(1.0688);transform-origin:0 0;">Completed</span>
<div style="position:absolute;left:490.50px;top:1003.00px;width:2184.70px;height:2.00px;box-sizing:border-box;background:linear-gradient(#d8d8da 50%,#e6e6e8 50%);"></div>
<span style="position:absolute;left:533.10px;top:957.00px;font-size:18.9px;line-height:25px;font-weight:400;color:#454548;white-space:nowrap;">4</span>
<div style="position:absolute;left:602.60px;top:952.45px;width:121.10px;height:33.60px;box-sizing:border-box;background:#f0f0f0;border-radius:11px;"></div>
<span style="position:absolute;left:614.20px;top:957.00px;font-size:18.5px;line-height:25px;font-weight:400;color:#2b5db3;white-space:nowrap;transform:scaleX(1.0180);transform-origin:0 0;">JC-2026-15</span>
<div style="position:absolute;left:838.60px;top:952.45px;width:194.60px;height:33.60px;box-sizing:border-box;background:#f0f0f0;border-radius:11px;"></div>
<span style="position:absolute;left:850.40px;top:957.00px;font-size:18.5px;line-height:25px;font-weight:400;color:#2b5db3;white-space:nowrap;transform:scaleX(0.9597);transform-origin:0 0;">WORK-ORD-2026-10</span>
<span style="position:absolute;left:1073.04px;top:957.00px;font-size:18.3px;line-height:25px;font-weight:400;color:#454548;white-space:nowrap;transform:scaleX(1.0709);transform-origin:0 0;">Cutting &amp; Stitching</span>
<span style="position:absolute;left:1308.49px;top:957.00px;font-size:18.3px;line-height:25px;font-weight:400;color:#454548;white-space:nowrap;transform:scaleX(1.0074);transform-origin:0 0;">Processing Station 1</span>
<div style="position:absolute;left:1545.80px;top:968.00px;width:7.60px;height:2.00px;box-sizing:border-box;background:#5c5c60;border-radius:0.6px;"></div>
<div style="position:absolute;left:1765.60px;top:968.00px;width:7.60px;height:2.00px;box-sizing:border-box;background:#5c5c60;border-radius:0.6px;"></div>
<span style="position:absolute;right:541.19px;top:957.00px;font-size:18.9px;line-height:25px;font-weight:400;color:#454548;white-space:nowrap;transform:scaleX(0.9916);transform-origin:100% 0;">5.000</span>
<span style="position:absolute;right:305.69px;top:957.00px;font-size:18.9px;line-height:25px;font-weight:400;color:#454548;white-space:nowrap;transform:scaleX(0.9916);transform-origin:100% 0;">5.000</span>
<div style="position:absolute;left:2456.00px;top:953.65px;width:123.60px;height:32.20px;box-sizing:border-box;background:#dcfce7;border-radius:16.2px;border:1.3px solid #b9f1cc;"></div>
<span style="position:absolute;left:2469.07px;top:959.00px;font-size:17.6px;line-height:24px;font-weight:400;color:#126d40;white-space:nowrap;-webkit-text-stroke:0.42px #126d40;letter-spacing:0.772px;transform:scaleX(1.0688);transform-origin:0 0;">Completed</span>
<div style="position:absolute;left:490.50px;top:1073.00px;width:2184.70px;height:2.00px;box-sizing:border-box;background:linear-gradient(#d8d8da 50%,#e6e6e8 50%);"></div>
<span style="position:absolute;left:533.05px;top:1026.00px;font-size:18.9px;line-height:25px;font-weight:400;color:#454548;white-space:nowrap;">5</span>
<div style="position:absolute;left:602.60px;top:1022.15px;width:119.90px;height:33.60px;box-sizing:border-box;background:#f0f0f0;border-radius:11px;"></div>
<span style="position:absolute;left:614.20px;top:1026.00px;font-size:18.5px;line-height:25px;font-weight:400;color:#2b5db3;white-space:nowrap;transform:scaleX(1.0076);transform-origin:0 0;">JC-2026-17</span>
<div style="position:absolute;left:838.60px;top:1022.15px;width:195.00px;height:33.60px;box-sizing:border-box;background:#f0f0f0;border-radius:11px;"></div>
<span style="position:absolute;left:850.40px;top:1026.00px;font-size:18.5px;line-height:25px;font-weight:400;color:#2b5db3;white-space:nowrap;transform:scaleX(0.9625);transform-origin:0 0;">WORK-ORD-2026-19</span>
<span style="position:absolute;left:1072.38px;top:1027.00px;font-size:18.3px;line-height:25px;font-weight:400;color:#454548;white-space:nowrap;transform:scaleX(1.0787);transform-origin:0 0;">Producing</span>
<span style="position:absolute;left:1308.42px;top:1027.00px;font-size:18.3px;line-height:25px;font-weight:400;color:#454548;white-space:nowrap;transform:scaleX(1.0544);transform-origin:0 0;">Producer</span>
<div style="position:absolute;left:1545.80px;top:1037.00px;width:7.60px;height:2.00px;box-sizing:border-box;background:#5c5c60;border-radius:0.6px;"></div>
<div style="position:absolute;left:1765.60px;top:1037.00px;width:7.60px;height:2.00px;box-sizing:border-box;background:#5c5c60;border-radius:0.6px;"></div>
<span style="position:absolute;right:541.23px;top:1026.00px;font-size:18.9px;line-height:25px;font-weight:400;color:#454548;white-space:nowrap;transform:scaleX(0.9410);transform-origin:100% 0;">100.000</span>
<span style="position:absolute;right:305.73px;top:1026.00px;font-size:18.9px;line-height:25px;font-weight:400;color:#454548;white-space:nowrap;transform:scaleX(0.9410);transform-origin:100% 0;">100.000</span>
<div style="position:absolute;left:2456.00px;top:1023.35px;width:123.60px;height:32.20px;box-sizing:border-box;background:#dcfce7;border-radius:16.2px;border:1.3px solid #b9f1cc;"></div>
<span style="position:absolute;left:2469.07px;top:1029.00px;font-size:17.6px;line-height:24px;font-weight:400;color:#126d40;white-space:nowrap;-webkit-text-stroke:0.42px #126d40;letter-spacing:0.772px;transform:scaleX(1.0688);transform-origin:0 0;">Completed</span>
<div style="position:absolute;left:490.50px;top:1143.00px;width:2184.70px;height:2.00px;box-sizing:border-box;background:linear-gradient(#d8d8da 50%,#e6e6e8 50%);"></div>
<span style="position:absolute;left:533.00px;top:1096.00px;font-size:18.9px;line-height:25px;font-weight:400;color:#454548;white-space:nowrap;">6</span>
<div style="position:absolute;left:602.60px;top:1091.90px;width:121.10px;height:33.60px;box-sizing:border-box;background:#f0f0f0;border-radius:11px;"></div>
<span style="position:absolute;left:614.20px;top:1096.00px;font-size:18.5px;line-height:25px;font-weight:400;color:#2b5db3;white-space:nowrap;transform:scaleX(1.0191);transform-origin:0 0;">JC-2026-19</span>
<div style="position:absolute;left:838.60px;top:1091.90px;width:199.40px;height:33.60px;box-sizing:border-box;background:#f0f0f0;border-radius:11px;"></div>
<span style="position:absolute;left:850.40px;top:1096.00px;font-size:18.5px;line-height:25px;font-weight:400;color:#2b5db3;white-space:nowrap;transform:scaleX(0.9866);transform-origin:0 0;">WORK-ORD-2026-20</span>
<span style="position:absolute;left:1072.38px;top:1097.00px;font-size:18.3px;line-height:25px;font-weight:400;color:#454548;white-space:nowrap;transform:scaleX(1.0787);transform-origin:0 0;">Producing</span>
<span style="position:absolute;left:1308.42px;top:1097.00px;font-size:18.3px;line-height:25px;font-weight:400;color:#454548;white-space:nowrap;transform:scaleX(1.0544);transform-origin:0 0;">Producer</span>
<div style="position:absolute;left:1545.80px;top:1107.00px;width:7.60px;height:2.00px;box-sizing:border-box;background:#5c5c60;border-radius:0.6px;"></div>
<div style="position:absolute;left:1765.60px;top:1107.00px;width:7.60px;height:2.00px;box-sizing:border-box;background:#5c5c60;border-radius:0.6px;"></div>
<span style="position:absolute;right:541.23px;top:1096.00px;font-size:18.9px;line-height:25px;font-weight:400;color:#454548;white-space:nowrap;transform:scaleX(0.9410);transform-origin:100% 0;">100.000</span>
<span style="position:absolute;right:305.69px;top:1096.00px;font-size:18.9px;line-height:25px;font-weight:400;color:#454548;white-space:nowrap;transform:scaleX(0.9947);transform-origin:100% 0;">95.500</span>
<div style="position:absolute;left:2456.00px;top:1093.10px;width:123.60px;height:32.20px;box-sizing:border-box;background:#dcfce7;border-radius:16.2px;border:1.3px solid #b9f1cc;"></div>
<span style="position:absolute;left:2469.07px;top:1098.00px;font-size:17.6px;line-height:24px;font-weight:400;color:#126d40;white-space:nowrap;-webkit-text-stroke:0.42px #126d40;letter-spacing:0.772px;transform:scaleX(1.0688);transform-origin:0 0;">Completed</span>
<div style="position:absolute;left:490.50px;top:1212.00px;width:2184.70px;height:2.00px;box-sizing:border-box;background:linear-gradient(#d8d8da 50%,#e6e6e8 50%);"></div>
<span style="position:absolute;left:533.05px;top:1166.00px;font-size:18.9px;line-height:25px;font-weight:400;color:#454548;white-space:nowrap;">7</span>
<div style="position:absolute;left:602.60px;top:1161.65px;width:125.20px;height:33.60px;box-sizing:border-box;background:#f0f0f0;border-radius:11px;"></div>
<span style="position:absolute;left:614.19px;top:1166.00px;font-size:18.5px;line-height:25px;font-weight:400;color:#2b5db3;white-space:nowrap;transform:scaleX(1.0630);transform-origin:0 0;">JC-2026-22</span>
<div style="position:absolute;left:838.60px;top:1161.65px;width:200.90px;height:33.60px;box-sizing:border-box;background:#f0f0f0;border-radius:11px;"></div>
<span style="position:absolute;left:850.40px;top:1166.00px;font-size:18.5px;line-height:25px;font-weight:400;color:#2b5db3;white-space:nowrap;transform:scaleX(0.9939);transform-origin:0 0;">WORK-ORD-2026-44</span>
<span style="position:absolute;left:1072.44px;top:1167.00px;font-size:18.3px;line-height:25px;font-weight:400;color:#454548;white-space:nowrap;transform:scaleX(1.0369);transform-origin:0 0;">Processing Raw Cotton</span>
<span style="position:absolute;left:1308.49px;top:1167.00px;font-size:18.3px;line-height:25px;font-weight:400;color:#454548;white-space:nowrap;transform:scaleX(1.0074);transform-origin:0 0;">Processing Station 1</span>
<div style="position:absolute;left:1545.80px;top:1177.00px;width:7.60px;height:2.00px;box-sizing:border-box;background:#5c5c60;border-radius:0.6px;"></div>
<div style="position:absolute;left:1765.60px;top:1177.00px;width:7.60px;height:2.00px;box-sizing:border-box;background:#5c5c60;border-radius:0.6px;"></div>
<span style="position:absolute;right:541.23px;top:1166.00px;font-size:18.9px;line-height:25px;font-weight:400;color:#454548;white-space:nowrap;transform:scaleX(0.9365);transform-origin:100% 0;">160.000</span>
<span style="position:absolute;right:305.73px;top:1166.00px;font-size:18.9px;line-height:25px;font-weight:400;color:#454548;white-space:nowrap;transform:scaleX(0.9365);transform-origin:100% 0;">160.000</span>
<div style="position:absolute;left:2456.00px;top:1162.85px;width:123.60px;height:32.20px;box-sizing:border-box;background:#dcfce7;border-radius:16.2px;border:1.3px solid #b9f1cc;"></div>
<span style="position:absolute;left:2469.07px;top:1168.00px;font-size:17.6px;line-height:24px;font-weight:400;color:#126d40;white-space:nowrap;-webkit-text-stroke:0.42px #126d40;letter-spacing:0.772px;transform:scaleX(1.0688);transform-origin:0 0;">Completed</span>
<div style="position:absolute;left:490.50px;top:1282.00px;width:2184.70px;height:2.00px;box-sizing:border-box;background:linear-gradient(#d8d8da 50%,#e6e6e8 50%);"></div>
<span style="position:absolute;left:533.05px;top:1235.00px;font-size:18.9px;line-height:25px;font-weight:400;color:#454548;white-space:nowrap;">8</span>
<div style="position:absolute;left:602.60px;top:1231.35px;width:126.10px;height:33.60px;box-sizing:border-box;background:#f0f0f0;border-radius:11px;"></div>
<span style="position:absolute;left:614.19px;top:1235.00px;font-size:18.5px;line-height:25px;font-weight:400;color:#2b5db3;white-space:nowrap;transform:scaleX(1.0680);transform-origin:0 0;">JC-2026-24</span>
<div style="position:absolute;left:838.60px;top:1231.35px;width:200.00px;height:33.60px;box-sizing:border-box;background:#f0f0f0;border-radius:11px;"></div>
<span style="position:absolute;left:850.40px;top:1235.00px;font-size:18.5px;line-height:25px;font-weight:400;color:#2b5db3;white-space:nowrap;transform:scaleX(0.9905);transform-origin:0 0;">WORK-ORD-2026-43</span>
<span style="position:absolute;left:1073.15px;top:1236.00px;font-size:18.3px;line-height:25px;font-weight:400;color:#454548;white-space:nowrap;transform:scaleX(1.0629);transform-origin:0 0;">Spinning</span>
<span style="position:absolute;left:1308.49px;top:1236.00px;font-size:18.3px;line-height:25px;font-weight:400;color:#454548;white-space:nowrap;transform:scaleX(1.0074);transform-origin:0 0;">Processing Station 1</span>
<div style="position:absolute;left:1545.80px;top:1246.00px;width:7.60px;height:2.00px;box-sizing:border-box;background:#5c5c60;border-radius:0.6px;"></div>
<div style="position:absolute;left:1765.60px;top:1246.00px;width:7.60px;height:2.00px;box-sizing:border-box;background:#5c5c60;border-radius:0.6px;"></div>
<span style="position:absolute;right:541.20px;top:1235.00px;font-size:18.9px;line-height:25px;font-weight:400;color:#454548;white-space:nowrap;transform:scaleX(0.9842);transform-origin:100% 0;">40.000</span>
<span style="position:absolute;right:305.70px;top:1235.00px;font-size:18.9px;line-height:25px;font-weight:400;color:#454548;white-space:nowrap;transform:scaleX(0.9842);transform-origin:100% 0;">40.000</span>
<div style="position:absolute;left:2456.00px;top:1232.55px;width:123.60px;height:32.20px;box-sizing:border-box;background:#dcfce7;border-radius:16.2px;border:1.3px solid #b9f1cc;"></div>
<span style="position:absolute;left:2469.07px;top:1238.00px;font-size:17.6px;line-height:24px;font-weight:400;color:#126d40;white-space:nowrap;-webkit-text-stroke:0.42px #126d40;letter-spacing:0.772px;transform:scaleX(1.0688);transform-origin:0 0;">Completed</span>
<div style="position:absolute;left:490.50px;top:1352.00px;width:2184.70px;height:2.00px;box-sizing:border-box;background:linear-gradient(#d8d8da 50%,#e6e6e8 50%);"></div>
<span style="position:absolute;left:533.05px;top:1305.00px;font-size:18.9px;line-height:25px;font-weight:400;color:#454548;white-space:nowrap;">9</span>
<div style="position:absolute;left:602.60px;top:1301.05px;width:126.10px;height:33.60px;box-sizing:border-box;background:#f0f0f0;border-radius:11px;"></div>
<span style="position:absolute;left:614.19px;top:1305.00px;font-size:18.5px;line-height:25px;font-weight:400;color:#2b5db3;white-space:nowrap;transform:scaleX(1.0713);transform-origin:0 0;">JC-2026-26</span>
<div style="position:absolute;left:838.60px;top:1301.05px;width:200.00px;height:33.60px;box-sizing:border-box;background:#f0f0f0;border-radius:11px;"></div>
<span style="position:absolute;left:850.40px;top:1305.00px;font-size:18.5px;line-height:25px;font-weight:400;color:#2b5db3;white-space:nowrap;transform:scaleX(0.9911);transform-origin:0 0;">WORK-ORD-2026-52</span>
<span style="position:absolute;left:1072.44px;top:1306.00px;font-size:18.3px;line-height:25px;font-weight:400;color:#454548;white-space:nowrap;transform:scaleX(1.0369);transform-origin:0 0;">Processing Raw Cotton</span>
<span style="position:absolute;left:1308.49px;top:1306.00px;font-size:18.3px;line-height:25px;font-weight:400;color:#454548;white-space:nowrap;transform:scaleX(1.0074);transform-origin:0 0;">Processing Station 1</span>
<div style="position:absolute;left:1545.80px;top:1316.00px;width:7.60px;height:2.00px;box-sizing:border-box;background:#5c5c60;border-radius:0.6px;"></div>
<div style="position:absolute;left:1765.60px;top:1316.00px;width:7.60px;height:2.00px;box-sizing:border-box;background:#5c5c60;border-radius:0.6px;"></div>
<span style="position:absolute;right:541.23px;top:1305.00px;font-size:18.9px;line-height:25px;font-weight:400;color:#454548;white-space:nowrap;transform:scaleX(0.9365);transform-origin:100% 0;">160.000</span>
<span style="position:absolute;right:305.73px;top:1305.00px;font-size:18.9px;line-height:25px;font-weight:400;color:#454548;white-space:nowrap;transform:scaleX(0.9365);transform-origin:100% 0;">160.000</span>
<div style="position:absolute;left:2456.00px;top:1302.25px;width:123.60px;height:32.20px;box-sizing:border-box;background:#dcfce7;border-radius:16.2px;border:1.3px solid #b9f1cc;"></div>
<span style="position:absolute;left:2469.07px;top:1307.00px;font-size:17.6px;line-height:24px;font-weight:400;color:#126d40;white-space:nowrap;-webkit-text-stroke:0.42px #126d40;letter-spacing:0.772px;transform:scaleX(1.0688);transform-origin:0 0;">Completed</span>
<div style="position:absolute;left:490.50px;top:1422.00px;width:2184.70px;height:2.00px;box-sizing:border-box;background:linear-gradient(#d8d8da 50%,#e6e6e8 50%);"></div>
<span style="position:absolute;left:527.51px;top:1375.00px;font-size:18.9px;line-height:25px;font-weight:400;color:#454548;white-space:nowrap;transform:scaleX(0.8143);transform-origin:50% 0;">10</span>
<div style="position:absolute;left:602.60px;top:1370.75px;width:126.10px;height:33.60px;box-sizing:border-box;background:#f0f0f0;border-radius:11px;"></div>
<span style="position:absolute;left:614.19px;top:1375.00px;font-size:18.5px;line-height:25px;font-weight:400;color:#2b5db3;white-space:nowrap;transform:scaleX(1.0713);transform-origin:0 0;">JC-2026-28</span>
<div style="position:absolute;left:838.60px;top:1370.75px;width:195.60px;height:33.60px;box-sizing:border-box;background:#f0f0f0;border-radius:11px;"></div>
<span style="position:absolute;left:850.40px;top:1375.00px;font-size:18.5px;line-height:25px;font-weight:400;color:#2b5db3;white-space:nowrap;transform:scaleX(0.9664);transform-origin:0 0;">WORK-ORD-2026-51</span>
<span style="position:absolute;left:1073.15px;top:1376.00px;font-size:18.3px;line-height:25px;font-weight:400;color:#454548;white-space:nowrap;transform:scaleX(1.0629);transform-origin:0 0;">Spinning</span>
<span style="position:absolute;left:1308.49px;top:1376.00px;font-size:18.3px;line-height:25px;font-weight:400;color:#454548;white-space:nowrap;transform:scaleX(1.0074);transform-origin:0 0;">Processing Station 1</span>
<div style="position:absolute;left:1545.80px;top:1386.00px;width:7.60px;height:2.00px;box-sizing:border-box;background:#5c5c60;border-radius:0.6px;"></div>
<div style="position:absolute;left:1765.60px;top:1386.00px;width:7.60px;height:2.00px;box-sizing:border-box;background:#5c5c60;border-radius:0.6px;"></div>
<span style="position:absolute;right:541.20px;top:1375.00px;font-size:18.9px;line-height:25px;font-weight:400;color:#454548;white-space:nowrap;transform:scaleX(0.9842);transform-origin:100% 0;">40.000</span>
<span style="position:absolute;right:305.70px;top:1375.00px;font-size:18.9px;line-height:25px;font-weight:400;color:#454548;white-space:nowrap;transform:scaleX(0.9842);transform-origin:100% 0;">40.000</span>
<div style="position:absolute;left:2456.00px;top:1371.95px;width:123.60px;height:32.20px;box-sizing:border-box;background:#dcfce7;border-radius:16.2px;border:1.3px solid #b9f1cc;"></div>
<span style="position:absolute;left:2469.07px;top:1377.00px;font-size:17.6px;line-height:24px;font-weight:400;color:#126d40;white-space:nowrap;-webkit-text-stroke:0.42px #126d40;letter-spacing:0.772px;transform:scaleX(1.0688);transform-origin:0 0;">Completed</span>
</div></div>
</body></html>
